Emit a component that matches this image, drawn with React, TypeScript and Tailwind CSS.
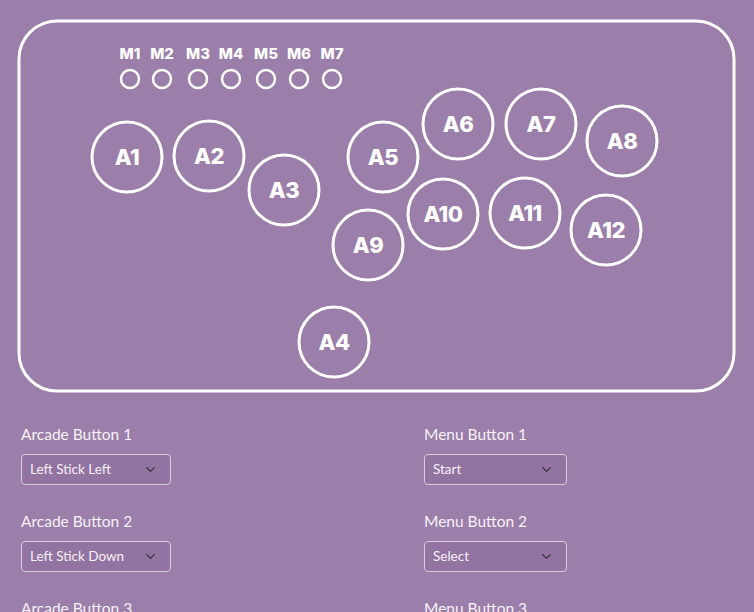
import { ChevronDown } from "lucide-react";

const menuKeys = [
  { label: "M1", x: 130 },
  { label: "M2", x: 162 },
  { label: "M3", x: 198 },
  { label: "M4", x: 231 },
  { label: "M5", x: 266 },
  { label: "M6", x: 299 },
  { label: "M7", x: 332 },
];

const arcadeKeys = [
  { label: "A1", x: 127, y: 157 },
  { label: "A2", x: 209, y: 156 },
  { label: "A3", x: 284, y: 190 },
  { label: "A4", x: 334, y: 342 },
  { label: "A5", x: 383, y: 157 },
  { label: "A6", x: 458, y: 124 },
  { label: "A7", x: 541, y: 124 },
  { label: "A8", x: 622, y: 141 },
  { label: "A9", x: 368, y: 245 },
  { label: "A10", x: 443, y: 214 },
  { label: "A11", x: 525, y: 213 },
  { label: "A12", x: 606, y: 230 },
];

const rows = [
  { left: ["Arcade Button 1", "Left Stick Left"], right: ["Menu Button 1", "Start"] },
  { left: ["Arcade Button 2", "Left Stick Down"], right: ["Menu Button 2", "Select"] },
  { left: ["Arcade Button 3", "Left Stick Right"], right: ["Menu Button 3", "Home"] },
];

function Field({ label, value, wide }: { label: string; value: string; wide?: boolean }) {
  return (
    <div className="flex flex-col items-start">
      <div className="text-[15.5px] leading-5 text-[#f6f2f8]">{label}</div>
      <button
        className={`mt-[10px] h-[31px] flex items-center justify-between pl-[8px] pr-[12px] rounded-[4px] border border-[#d6cdda] bg-[#9373a1] text-[13.5px] text-[#f6f2f8] ${wide ? "w-[150px]" : "w-[143px]"}`}
      >
        <span>{value}</span>
        <ChevronDown size={15} strokeWidth={2} className="text-[#333]" />
      </button>
    </div>
  );
}

export default function App() {
  return (
    <div className="h-[612px] w-[754px] overflow-hidden bg-[#9b7ea9]" style={{ fontFamily: "Lato, 'Noto Sans', sans-serif" }}>
      <svg width="754" height="404" viewBox="0 0 754 404" className="block">
        <rect x="19" y="21" width="715" height="370" rx="38" fill="none" stroke="#fff" strokeWidth="3" />
        {menuKeys.map((k) => (
          <g key={k.label}>
            <text
              x={k.x}
              y={59}
              textAnchor="middle"
              fill="#fff"
              fontSize="15"
              fontWeight="800"
              fontFamily="Inter, Lato, sans-serif"
            >
              {k.label}
            </text>
            <circle cx={k.x} cy={79} r={9} fill="none" stroke="#fff" strokeWidth="2.5" />
          </g>
        ))}
        {arcadeKeys.map((k) => (
          <g key={k.label}>
            <circle cx={k.x} cy={k.y} r={35} fill="none" stroke="#fff" strokeWidth="3" />
            <text
              x={k.x}
              y={k.y + 8}
              textAnchor="middle"
              fill="#fff"
              fontSize="22"
              fontWeight="800"
              letterSpacing="-0.5"
              fontFamily="Inter, Lato, sans-serif"
            >
              {k.label}
            </text>
          </g>
        ))}
      </svg>
      <div className="grid grid-cols-[403px_1fr] gap-y-[26px] px-[21px] pt-[20px]">
        {rows.map((r) => (
          <div key={r.left[0]} className="contents">
            <Field label={r.left[0]} value={r.left[1]} wide />
            <Field label={r.right[0]} value={r.right[1]} />
          </div>
        ))}
      </div>
    </div>
  );
}
